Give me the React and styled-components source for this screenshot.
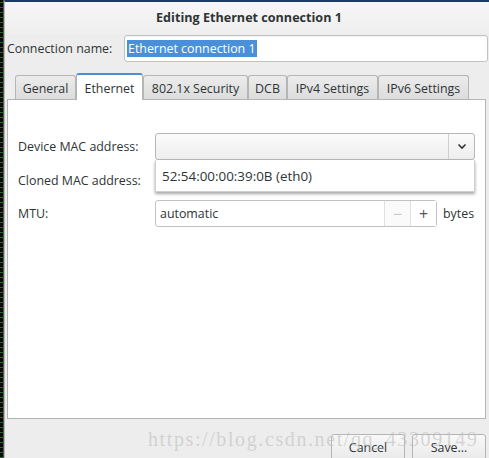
import React from "react";
import styled, { createGlobalStyle } from "styled-components";

const Global = createGlobalStyle`
  html, body { margin: 0; padding: 0; width: 489px; height: 458px; overflow: hidden; background: #ededed; }
  body { font-family: "Open Sans", "DejaVu Sans", sans-serif; font-size: 12.4px; color: #2e3436; }
`;

const Screen = styled.div`
  display: flex;
  width: 489px;
  height: 458px;
  position: relative;
  overflow: hidden;
`;

const LeftStrip = styled.div`
  width: 3px;
  flex: none;
  background: repeating-linear-gradient(to bottom, #0a0a0a 0 2px, #1f6b1f 2px 3px, #0a0a0a 3px 5px);
  border-right: 1px solid #555;
`;

const Window = styled.div`
  flex: 1;
  display: flex;
  flex-direction: column;
  border-top: 2px solid #1b3a6b;
  background: #ededed;
  border-left: 1px solid #b9b9b9;
  overflow: hidden;
  & > * { flex-shrink: 0; }
`;

const TitleBar = styled.div`
  height: 31px;
  display: flex;
  align-items: center;
  justify-content: center;
  font-weight: 700;
  font-size: 12.6px;
  background: linear-gradient(#f6f6f6, #efefef);
  padding-left: 4px;
`;

const NameRow = styled.div`
  display: flex;
  align-items: center;
  margin: 2px 0 0 2px;
  height: 27px;
`;

const Label = styled.span`
  white-space: nowrap;
  color: #2e3436;
`;

const NameLabel = styled(Label)`
  width: 117px;
`;

const Entry = styled.div`
  box-sizing: border-box;
  height: 27px;
  width: ${p => p.$w}px;
  background: #fff;
  border: 1px solid #bfc3c2;
  border-radius: 3px;
  display: flex;
  align-items: center;
  padding-left: 2px;
  box-shadow: inset 0 1px 1px rgba(0,0,0,0.06);
`;

const Selected = styled.span`
  background: #4a90d9;
  color: #fff;
  padding: 0 1px;
  line-height: 17px;
`;

const Notebook = styled.div`
  margin: 11px 0 0 2px;
  width: 479px;
  display: flex;
  flex-direction: column;
`;

const TabRow = styled.div`
  display: flex;
  align-items: flex-end;
  padding-left: 8px;
  height: 26px;
`;

const Tab = styled.div`
  box-sizing: border-box;
  height: ${p => (p.$active ? 27 : 24)}px;
  width: ${p => p.$w}px;
  display: flex;
  align-items: center;
  justify-content: center;
  border: 1px solid #b4b6b5;
  border-bottom: none;
  border-radius: 3px 3px 0 0;
  background: ${p => (p.$active ? "#fff" : "linear-gradient(#ececec, #dcdcdc)")};
  border-top: ${p => (p.$active ? "2px solid #4a90d9" : "1px solid #b4b6b5")};
  margin-bottom: ${p => (p.$active ? -1 : 0)}px;
  position: relative;
  color: #2e3436;
  padding-top: ${p => (p.$active ? 1 : 2)}px;
`;

const Frame = styled.div`
  box-sizing: border-box;
  height: 320px;
  background: #fff;
  border: 1px solid #b4b6b5;
  padding: 33px 0 0 10px;
  display: flex;
  flex-direction: column;
  gap: 6.5px;
`;

const Row = styled.div`
  display: flex;
  align-items: center;
  height: 27px;
  position: relative;
`;

const RowLabel = styled(Label)`
  width: 137px;
  flex: none;
`;

const Combo = styled.div`
  box-sizing: border-box;
  width: 320px;
  height: 27px;
  border: 1px solid #b6b8b7;
  border-radius: 3px;
  background: linear-gradient(#fbfbfb, #eeeeee);
  display: flex;
  justify-content: flex-end;
`;

const ComboArrow = styled.div`
  width: 25px;
  border-left: 1px solid #d0d0d0;
  display: flex;
  align-items: center;
  justify-content: center;
`;

const Popup = styled.div`
  position: absolute;
  left: 137px;
  top: 27px;
  width: 320px;
  height: 32px;
  box-sizing: border-box;
  background: #fff;
  border: 1px solid #cfcfcf;
  border-top: none;
  box-shadow: 0 2px 3px rgba(0,0,0,0.35);
  display: flex;
  align-items: center;
  padding-left: 6px;
  font-size: 13.4px;
  z-index: 2;
`;

const Spin = styled.div`
  box-sizing: border-box;
  width: 282px;
  height: 27px;
  border: 1px solid #bfc3c2;
  border-radius: 3px;
  background: #fff;
  display: flex;
  align-items: stretch;
`;

const SpinText = styled.div`
  flex: 1;
  display: flex;
  align-items: center;
  padding-left: 4px;
`;

const SpinBtn = styled.div`
  width: 25px;
  border-left: 1px solid #e0e0e0;
  display: flex;
  align-items: center;
  justify-content: center;
  color: ${p => (p.$disabled ? "#c8c8c8" : "#555")};
  font-size: 16px;
  background: ${p => (p.$disabled ? "#fafafa" : "#fff")};
`;

const Unit = styled.span`
  margin-left: 6px;
`;

const Footer = styled.div`
  display: flex;
  justify-content: flex-end;
  gap: 7px;
  margin-top: 15px;
  width: 481px;
`;

const Button = styled.div`
  box-sizing: border-box;
  width: 74px;
  height: 30px;
  border: 1px solid #b4b6b5;
  border-radius: 3px;
  background: linear-gradient(#f8f8f8, #e8e8e8);
  display: flex;
  align-items: center;
  justify-content: center;
  padding-bottom: 4px;
`;

const Watermark = styled.div`
  position: absolute;
  left: 148px;
  top: 428px;
  font-family: "Liberation Serif", "DejaVu Serif", serif;
  font-size: 20px;
  letter-spacing: 1.6px;
  color: rgba(190, 190, 190, 0.6);
  white-space: nowrap;
  pointer-events: none;
`;

const Chevron = () => (
  <svg width="10" height="7" viewBox="0 0 10 7">
    <path d="M1.5 1.5 L5 5 L8.5 1.5" fill="none" stroke="#2e3436" strokeWidth="1.6" />
  </svg>
);

const tabs = [
  ["General", 61],
  ["Ethernet", 67, true],
  ["802.1x Security", 105],
  ["DCB", 39],
  ["IPv4 Settings", 91],
  ["IPv6 Settings", 91],
];

export default function App() {
  return (
    <Screen>
      <Global />
      <LeftStrip />
      <Window>
        <TitleBar>Editing Ethernet connection 1</TitleBar>
        <NameRow>
          <NameLabel>Connection name:</NameLabel>
          <Entry $w={364}>
            <Selected>Ethernet connection 1</Selected>
          </Entry>
        </NameRow>
        <Notebook>
          <TabRow>
            {tabs.map(([t, w, a]) => (
              <Tab key={t} $w={w} $active={a}>{t}</Tab>
            ))}
          </TabRow>
          <Frame>
            <Row>
              <RowLabel>Device MAC address:</RowLabel>
              <Combo>
                <ComboArrow><Chevron /></ComboArrow>
              </Combo>
              <Popup>52:54:00:00:39:0B (eth0)</Popup>
            </Row>
            <Row>
              <RowLabel>Cloned MAC address:</RowLabel>
            </Row>
            <Row>
              <RowLabel>MTU:</RowLabel>
              <Spin>
                <SpinText>automatic</SpinText>
                <SpinBtn $disabled>−</SpinBtn>
                <SpinBtn>+</SpinBtn>
              </Spin>
              <Unit>bytes</Unit>
            </Row>
          </Frame>
        </Notebook>
        <Footer>
          <Button>Cancel</Button>
          <Button>Save...</Button>
        </Footer>
      </Window>
      <Watermark>https://blog.csdn.net/qq_43309149</Watermark>
    </Screen>
  );
}
